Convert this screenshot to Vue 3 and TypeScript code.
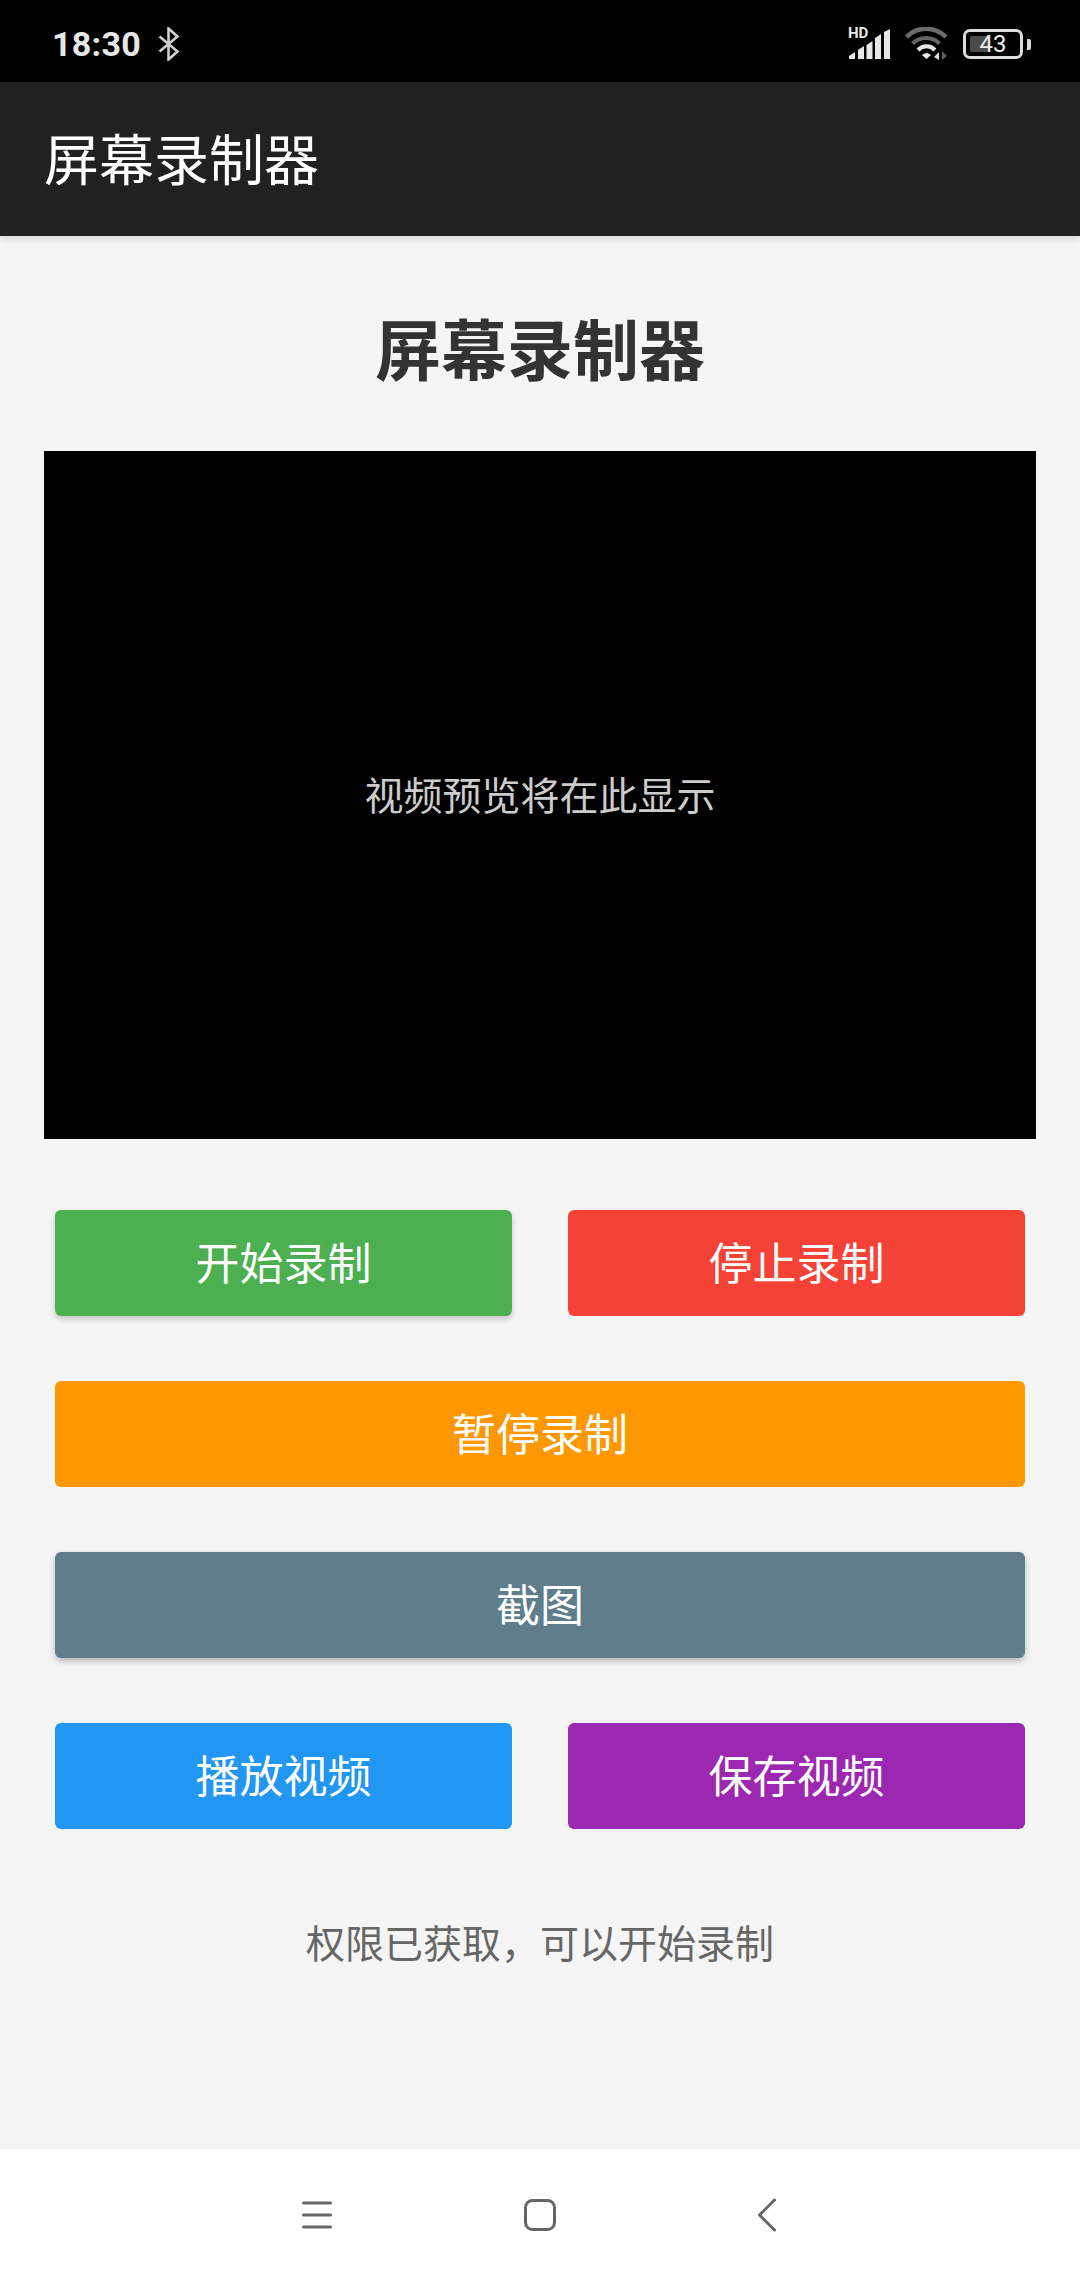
<script setup lang="ts">
const fullRow = (label: string, cls: string) => ({ label, cls });

const rows = [
  [fullRow('开始录制', 'green'), fullRow('停止录制', 'red')],
  [fullRow('暂停录制', 'orange')],
  [fullRow('截图', 'slate')],
  [fullRow('播放视频', 'blue'), fullRow('保存视频', 'purple')],
];
</script>

<template>
  <div class="screen">
    <div class="status-bar">
      <div class="status-left">
        <span class="time">18:30</span>
        <svg class="bt" width="22" height="34" viewBox="0 0 22 34" fill="none">
          <path d="M1.500 9.500 19.500 24.500 10.500 32.500V1.500L19.500 9.500 1.500 24.500" stroke="#cfcfcf" stroke-width="2.600" />
        </svg>
      </div>
      <div class="status-right">
        <div class="signal">
          <span class="hd">HD</span>
          <svg width="42" height="30" viewBox="0 0 42 30" fill="#e8e8e8">
            <path d="M1 30V27L7 23V30Z" />
            <path d="M10 30V21L16 17V30Z" />
            <path d="M18.500 30V16L24.500 12V30Z" />
            <path d="M27 30V9L33 5V30Z" />
            <path d="M36 30V3L42 0V30Z" />
          </svg>
        </div>
        <svg class="wifi" width="43" height="34" viewBox="0 0 43 34" fill="none">
          <path d="M1.500 10C12 -1 30 -1 41 10" stroke="#6b6b6b" stroke-width="4.500" />
          <path d="M7.500 16.500C15 9 27 9 34.500 16.500" stroke="#666" stroke-width="4" />
          <path d="M13 23C18 18 25 18 30 23" stroke="#e8e8e8" stroke-width="4" />
          <path d="M17 28C20 25.500 23 25.500 26 28L21.500 32Z" fill="#f0f0f0" />
          <path d="M34 33V25L29 30Z" fill="#dcdcdc" />
          <path d="M37 24V33L42 29Z" fill="#5a5a5a" />
        </svg>
        <div class="battery">
          <div class="battery-body">
            <div class="battery-fill"></div>
            <span class="battery-num">43</span>
          </div>
          <div class="battery-cap"></div>
        </div>
      </div>
    </div>

    <header class="app-bar">屏幕录制器</header>

    <main class="content">
      <h1 class="heading">屏幕录制器</h1>
      <div class="video">视频预览将在此显示</div>

      <div class="buttons">
        <div v-for="(row, i) in rows" :key="i" class="btn-row">
          <button v-for="b in row" :key="b.label" class="btn" :class="b.cls">{{ b.label }}</button>
        </div>
      </div>

      <p class="status-text">权限已获取，可以开始录制</p>
    </main>

    <nav class="nav-bar">
      <svg width="30" height="30" viewBox="0 0 30 30" fill="none" stroke="#666" stroke-width="3" stroke-linecap="round">
        <path d="M1.500 3H28.500M1.500 15H28.500M1.500 27H28.500" />
      </svg>
      <svg class="home" width="32" height="32" viewBox="0 0 32 32" fill="none" stroke="#666" stroke-width="3">
        <rect x="1.500" y="1.500" width="29" height="29" rx="7" />
      </svg>
      <svg width="18" height="34" viewBox="0 0 18 34" fill="none" stroke="#666" stroke-width="3" stroke-linecap="round" stroke-linejoin="round">
        <path d="M16.500 2 1.500 17 16.500 32" />
      </svg>
    </nav>
  </div>
</template>

<style>
html,
body {
  margin: 0;
  background: #f5f5f5;
}
</style>

<style scoped>
.screen {
  width: 1080px;
  height: 2280px;
  display: flex;
  flex-direction: column;
  background: #f5f5f5;
  font-family: "Noto Sans CJK SC", "Noto Sans", sans-serif;
  overflow: hidden;
}

.status-bar {
  height: 82px;
  flex: none;
  box-sizing: border-box;
  padding: 6px 49px 0 52px;
  background: #000;
  display: flex;
  justify-content: space-between;
  align-items: center;
}
.status-left {
  display: flex;
  align-items: center;
  gap: 17px;
}
.time {
  font-family: Roboto, sans-serif;
  font-size: 34px;
  font-weight: 700;
  color: #e6e6e6;
  letter-spacing: 0.3px;
}
.status-right {
  display: flex;
  align-items: center;
}
.signal {
  width: 42px;
  height: 30px;
  position: relative;
  margin-right: 15px;
}
.signal svg {
  display: block;
}
.hd {
  position: absolute;
  left: 0;
  top: -3px;
  font-family: Roboto, sans-serif;
  font-size: 15px;
  line-height: 14px;
  font-weight: 700;
  color: #e8e8e8;
}
.wifi {
  margin-right: 15px;
}
.battery {
  display: flex;
  align-items: center;
  gap: 4px;
}
.battery-body {
  width: 60px;
  height: 30px;
  box-sizing: border-box;
  border: 3px solid #dcdcdc;
  border-radius: 7px;
  position: relative;
  display: flex;
  align-items: center;
  justify-content: center;
}
.battery-fill {
  position: absolute;
  left: 4px;
  top: 4px;
  bottom: 4px;
  width: 18px;
  background: #4a4a4a;
  border-radius: 2px;
}
.battery-num {
  position: relative;
  font-family: Roboto, sans-serif;
  font-size: 24px;
  line-height: 24px;
  color: #eee;
}
.battery-cap {
  width: 4px;
  height: 11px;
  background: #dcdcdc;
  border-radius: 0 2px 2px 0;
}

.app-bar {
  height: 154px;
  flex: none;
  box-sizing: border-box;
  padding-left: 44px;
  background: #212121;
  color: #fff;
  font-size: 55px;
  line-height: 148px;
  box-shadow: 0 3px 8px rgba(0, 0, 0, 0.12);
  position: relative;
}

.content {
  flex: 1;
  box-sizing: border-box;
  padding: 44px 44px 0;
  display: flex;
  flex-direction: column;
}
.heading {
  margin: 0 0 44px;
  padding-top: 6px;
  height: 121px;
  font-size: 66px;
  line-height: 121px;
  font-weight: 700;
  text-align: center;
  color: #333;
}
.video {
  height: 688px;
  flex: none;
  box-sizing: border-box;
  padding-bottom: 5px;
  background: #000;
  color: #ccc;
  font-size: 39px;
  display: flex;
  align-items: center;
  justify-content: center;
}

.buttons {
  margin-top: 71px;
  padding: 0 11px;
  display: flex;
  flex-direction: column;
  gap: 65px;
}
.btn-row {
  display: flex;
  gap: 56px;
}
.btn {
  flex: 1;
  height: 106px;
  padding: 0 0 5px;
  border: none;
  border-radius: 6px;
  font-family: inherit;
  font-size: 44px;
  color: #fff;
}
.green {
  background: #4caf50;
  box-shadow: 0 3px 6px rgba(0, 0, 0, 0.2);
}
.red {
  background: #f44336;
}
.orange {
  background: #ff9800;
}
.slate {
  background: #607d8b;
  box-shadow: 0 3px 6px rgba(0, 0, 0, 0.25);
}
.blue {
  background: #2196f3;
}
.purple {
  background: #9c27b0;
}

.status-text {
  margin: 86px 0 0;
  font-size: 39px;
  line-height: 52px;
  text-align: center;
  color: #666;
}

.nav-bar {
  height: 131px;
  flex: none;
  box-sizing: border-box;
  padding-left: 302px;
  background: #fff;
  display: flex;
  align-items: center;
}
.home {
  margin: 0 202px 0 192px;
}
</style>
